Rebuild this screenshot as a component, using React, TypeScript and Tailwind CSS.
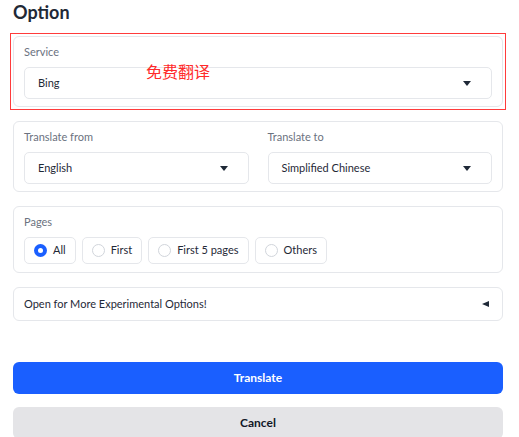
import { useState } from "react";

const font = { fontFamily: '"Lato", "Noto Sans CJK SC", sans-serif' };

function Caret() {
  return (
    <svg width="8" height="5" viewBox="0 0 8 5" className="shrink-0">
      <path d="M0 0 L8 0 L4 5 Z" fill="#1f2937" />
    </svg>
  );
}

function Select({ value }: { value: string }) {
  return (
    <div className="flex h-8 items-center justify-between rounded-[5px] border border-[#e5e7eb] bg-white pl-[13px] pr-[20px] text-[11px] text-[#1f2937]">
      <span>{value}</span>
      <Caret />
    </div>
  );
}

function Label({ children }: { children: string }) {
  return <div className="mb-[8px] text-[11px] leading-[14px] text-[#6b7280]">{children}</div>;
}

const pages = ["All", "First", "First 5 pages", "Others"];

export default function App() {
  const [page, setPage] = useState("All");

  return (
    <div style={font} className="h-[437px] w-[519px] overflow-hidden bg-white pl-[13px] pr-[16px] pt-[1px]">
      <h2 className="text-[18px] font-bold leading-[22px] text-[#1f2937]">Option</h2>

      <div className="relative mt-[10px] -mx-[3px] border border-[#ff3b3b] p-[2px]">
        <div className="rounded-[6px] border border-[#e5e7eb] px-[10px] pt-[8px] pb-[7px]">
          <Label>Service</Label>
          <Select value="Bing" />
        </div>
        <span className="absolute left-[135px] top-[28px] text-[16px] leading-[20px] text-[#ff2a2a]">
          免费翻译
        </span>
      </div>

      <div className="mt-[11px] grid grid-cols-2 gap-[19px] rounded-[6px] border border-[#e5e7eb] px-[10px] pt-[8px] pb-[7px]">
        <div>
          <Label>Translate from</Label>
          <Select value="English" />
        </div>
        <div>
          <Label>Translate to</Label>
          <Select value="Simplified Chinese" />
        </div>
      </div>

      <div className="mt-[14px] rounded-[6px] border border-[#e5e7eb] px-[10px] pt-[8px] pb-[8px]">
        <Label>Pages</Label>
        <div className="flex gap-[6px]">
          {pages.map((p) => (
            <button
              key={p}
              onClick={() => setPage(p)}
              className="flex h-[27px] items-center gap-[6px] rounded-[5px] border border-[#e5e7eb] bg-white px-[9px] text-[11px] text-[#1f2937]"
            >
              {page === p ? (
                <span className="flex h-[13px] w-[13px] items-center justify-center rounded-full bg-[#1a5fff]">
                  <span className="h-[5px] w-[5px] rounded-full bg-white" />
                </span>
              ) : (
                <span className="h-[13px] w-[13px] rounded-full border border-[#d1d5db]" />
              )}
              {p}
            </button>
          ))}
        </div>
      </div>

      <div className="mt-[14px] flex h-[34px] items-center justify-between rounded-[6px] border border-[#e5e7eb] pl-[10px] pr-[13px] text-[11px] text-[#1f2937]">
        <span>Open for More Experimental Options!</span>
        <svg width="7" height="6" viewBox="0 0 7 6">
          <path d="M0 3 L7 0 L7 6 Z" fill="#1f2937" />
        </svg>
      </div>

      <button className="mt-[41px] flex h-[32px] w-full items-center justify-center rounded-[6px] bg-[#1a5fff] text-[12px] font-bold text-white">
        Translate
      </button>
      <button className="mt-[13px] flex h-[32px] w-full items-center justify-center rounded-[6px] bg-[#e4e4e7] text-[12px] font-bold text-[#111827]">
        Cancel
      </button>
    </div>
  );
}
